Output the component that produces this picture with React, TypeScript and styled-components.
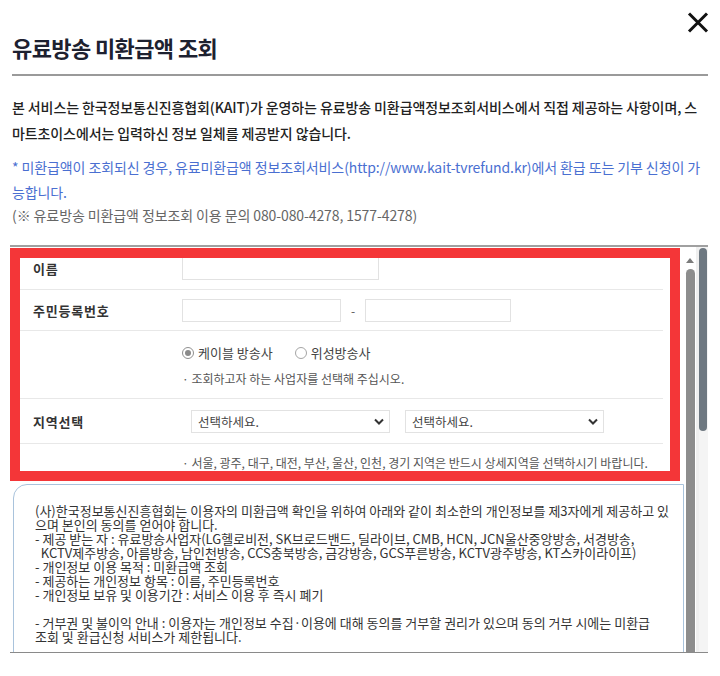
import styled, { createGlobalStyle } from 'styled-components';

const GlobalStyle = createGlobalStyle`
    * { box-sizing: border-box; }
    body {
        margin: 0;
        background: #fff;
        font-family: "Noto Sans CJK KR", "Noto Sans", sans-serif;
    }
`;

const Modal = styled.div`
    width: 720px;
    height: 676px;
    padding: 0 12px;
    overflow: hidden;
    background: #fff;
`;

const Header = styled.header`
    display: flex;
    justify-content: space-between;
    align-items: flex-start;
    height: 76px;
    padding-top: 12px;
    border-bottom: 2px solid #9a9a9a;
`;

const Title = styled.h1`
    margin: 21px 0 0;
    font-size: 22px;
    line-height: 28px;
    font-weight: 700;
    letter-spacing: -0.6px;
    color: #1d2130;
`;

const CloseButton = styled.button`
    display: flex;
    width: 22px;
    height: 21px;
    padding: 0;
    margin-right: -1px;
    border: 0;
    background: none;
    cursor: pointer;
`;

const Intro = styled.div`
    padding-top: 18px;
    font-size: 14px;
    letter-spacing: -0.1px;
    white-space: nowrap;
`;

const Lead = styled.p`
    margin: 0;
    line-height: 26px;
    font-weight: 500;
    color: #222;
`;

const Notice = styled.p`
    margin: 9px 0 0;
    line-height: 25px;
    color: #4a6fd1;
`;

const Contact = styled.p`
    margin: 0;
    line-height: 20px;
    color: #666;
`;

const Frame = styled.div`
    display: flex;
    width: 698px;
    height: 408px;
    margin: 20px 0 0 -2px;
    border-top: 2px solid #a0a0a0;
    border-bottom: 1px solid #8a8a8a;
    overflow: hidden;
`;

const FrameBody = styled.div`
    flex: 1;
    padding-top: 1px;
    overflow: hidden;
`;

const FormTable = styled.div`
    position: relative;
    width: 670px;
    padding: 0 17px 0 10px;

    &::after {
        content: '';
        position: absolute;
        inset: 0;
        border: 10px solid #f43638;
        pointer-events: none;
    }
`;

const Row = styled.div<{ $height: number; $last?: boolean }>`
    display: grid;
    grid-template-columns: 162px 1fr;
    align-items: center;
    height: ${p => p.$height}px;
    border-bottom: ${p => (p.$last ? 'none' : '1px solid #e8e8e8')};
`;

const Label = styled.div`
    padding-left: 13px;
    font-size: 13px;
    font-weight: 700;
    letter-spacing: 0.8px;
    color: #333;
`;

const Cell = styled.div<{ $column?: boolean }>`
    display: flex;
    flex-direction: ${p => (p.$column ? 'column' : 'row')};
    align-items: ${p => (p.$column ? 'flex-start' : 'center')};
`;

const TextInput = styled.div<{ $width: number }>`
    width: ${p => p.$width}px;
    height: 23px;
    border: 1px solid #e2e2e2;
    background: #fff;
`;

const Dash = styled.span`
    width: 24px;
    text-align: center;
    font-size: 12px;
    color: #555;
`;

const RadioGroup = styled.div`
    display: flex;
    align-items: center;
    height: 20px;
    margin-top: 2px;
`;

const RadioOption = styled.label`
    display: flex;
    align-items: center;
    gap: 4px;
    margin-right: 22px;
    font-size: 13px;
    color: #444;
`;

const RadioMark = styled.span<{ $checked?: boolean }>`
    display: flex;
    align-items: center;
    justify-content: center;
    width: 12px;
    height: 12px;
    border: 1px solid ${p => (p.$checked ? '#8f8f8f' : '#a5a5a5')};
    border-radius: 50%;
    background: #fff;

    &::after {
        content: '';
        width: 6px;
        height: 6px;
        border-radius: 50%;
        background: ${p => (p.$checked ? '#8a8a8a' : 'transparent')};
    }
`;

const Hint = styled.div<{ $gap?: number }>`
    margin-top: ${p => p.$gap ?? 0}px;
    font-size: 12px;
    line-height: 20px;
    color: #555;
`;

const SelectBox = styled.div`
    display: flex;
    align-items: center;
    justify-content: space-between;
    width: 199px;
    height: 23px;
    padding: 0 5px 0 6px;
    border: 1px solid #e2e2e2;
    font-size: 12.5px;
    color: #444;
`;

const Selects = styled.div`
    display: flex;
    gap: 15px;
    margin-left: 9px;
`;

const Agreement = styled.div`
    width: 671px;
    height: 240px;
    margin: 3px 0 0 3px;
    padding: 19px 0 0 21px;
    border: 1px solid #a9c3dc;
    border-top-left-radius: 14px;
    font-size: 13px;
    line-height: 14px;
    color: #333;
    white-space: pre;
`;

const InnerScroll = styled.div`
    display: flex;
    flex-direction: column;
    align-items: center;
    width: 15px;
    padding: 11px 3px 0 0;
    background: linear-gradient(to right, #fff 12px, #efefef 12px);
`;

const ArrowUp = styled.span`
    width: 0;
    height: 0;
    border-left: 4px solid transparent;
    border-right: 4px solid transparent;
    border-bottom: 5px solid #7b7b7b;
`;

const InnerThumb = styled.div`
    flex: 1;
    width: 9px;
    margin-top: 6px;
    border-radius: 5px 5px 0 0;
    background: #8d8d8d;
`;

const OuterScroll = styled.div`
    width: 9px;
    padding-top: 1px;
    background: #f4f4f4;
`;

const OuterThumb = styled.div`
    width: 8px;
    height: 183px;
    border-radius: 4px;
    background: #6e7881;
`;

const Chevron = () => (
    <svg width="10" height="7" viewBox="0 0 10 7">
        <polyline points="1,1.5 5,5.5 9,1.5" fill="none" stroke="#333" strokeWidth="2" />
    </svg>
);

const Select = () => (
    <SelectBox>
        선택하세요.
        <Chevron />
    </SelectBox>
);

const agreementText = [
    '(사)한국정보통신진흥협회는 이용자의 미환급액 확인을 위하여 아래와 같이 최소한의 개인정보를 제3자에게 제공하고 있',
    '으며 본인의 동의를 얻어야 합니다.',
    '- 제공 받는 자 : 유료방송사업자(LG헬로비전, SK브로드밴드, 딜라이브, CMB, HCN, JCN울산중앙방송, 서경방송,',
    '  KCTV제주방송, 아름방송, 남인천방송, CCS충북방송, 금강방송, GCS푸른방송, KCTV광주방송, KT스카이라이프)',
    '- 개인정보 이용 목적 : 미환급액 조회',
    '- 제공하는 개인정보 항목 : 이름, 주민등록번호',
    '- 개인정보 보유 및 이용기간 : 서비스 이용 후 즉시 폐기',
    '',
    '- 거부권 및 불이익 안내 : 이용자는 개인정보 수집·이용에 대해 동의를 거부할 권리가 있으며 동의 거부 시에는 미환급',
    '조회 및 환급신청 서비스가 제한됩니다.',
].join('\n');

const App = () => {
    return (
        <>
            <GlobalStyle />
            <Modal>
                <Header>
                    <Title>유료방송 미환급액 조회</Title>
                    <CloseButton aria-label="닫기">
                        <svg width="22" height="21" viewBox="0 0 22 21">
                            <path d="M2 1.5 L20 19.5 M20 1.5 L2 19.5" stroke="#111" strokeWidth="3" />
                        </svg>
                    </CloseButton>
                </Header>

                <Intro>
                    <Lead>
                        본 서비스는 한국정보통신진흥협회(KAIT)가 운영하는 유료방송 미환급액정보조회서비스에서 직접 제공하는 사항이며, 스
                        <br />
                        마트초이스에서는 입력하신 정보 일체를 제공받지 않습니다.
                    </Lead>
                    <Notice>
                        * 미환급액이 조회되신 경우, 유료미환급액 정보조회서비스(http://www.kait-tvrefund.kr)에서 환급 또는 기부 신청이 가
                        <br />
                        능합니다.
                    </Notice>
                    <Contact>(※ 유료방송 미환급액 정보조회 이용 문의 080-080-4278, 1577-4278)</Contact>
                </Intro>

                <Frame>
                    <FrameBody>
                        <FormTable>
                            <Row $height={42}>
                                <Label>이름</Label>
                                <Cell>
                                    <TextInput $width={197} />
                                </Cell>
                            </Row>
                            <Row $height={41}>
                                <Label>주민등록번호</Label>
                                <Cell>
                                    <TextInput $width={159} />
                                    <Dash>-</Dash>
                                    <TextInput $width={146} />
                                </Cell>
                            </Row>
                            <Row $height={68}>
                                <Label />
                                <Cell $column>
                                    <RadioGroup>
                                        <RadioOption>
                                            <RadioMark $checked />
                                            케이블 방송사
                                        </RadioOption>
                                        <RadioOption>
                                            <RadioMark />
                                            위성방송사
                                        </RadioOption>
                                    </RadioGroup>
                                    <Hint $gap={6}>· 조회하고자 하는 사업자를 선택해 주십시오.</Hint>
                                </Cell>
                            </Row>
                            <Row $height={45}>
                                <Label>지역선택</Label>
                                <Selects>
                                    <Select />
                                    <Select />
                                </Selects>
                            </Row>
                            <Row $height={37} $last>
                                <Label />
                                <Hint>· 서울, 광주, 대구, 대전, 부산, 울산, 인천, 경기 지역은 반드시 상세지역을 선택하시기 바랍니다.</Hint>
                            </Row>
                        </FormTable>
                        <Agreement>{agreementText}</Agreement>
                    </FrameBody>
                    <InnerScroll>
                        <ArrowUp />
                        <InnerThumb />
                    </InnerScroll>
                    <OuterScroll>
                        <OuterThumb />
                    </OuterScroll>
                </Frame>
            </Modal>
        </>
    );
};

export default App;
